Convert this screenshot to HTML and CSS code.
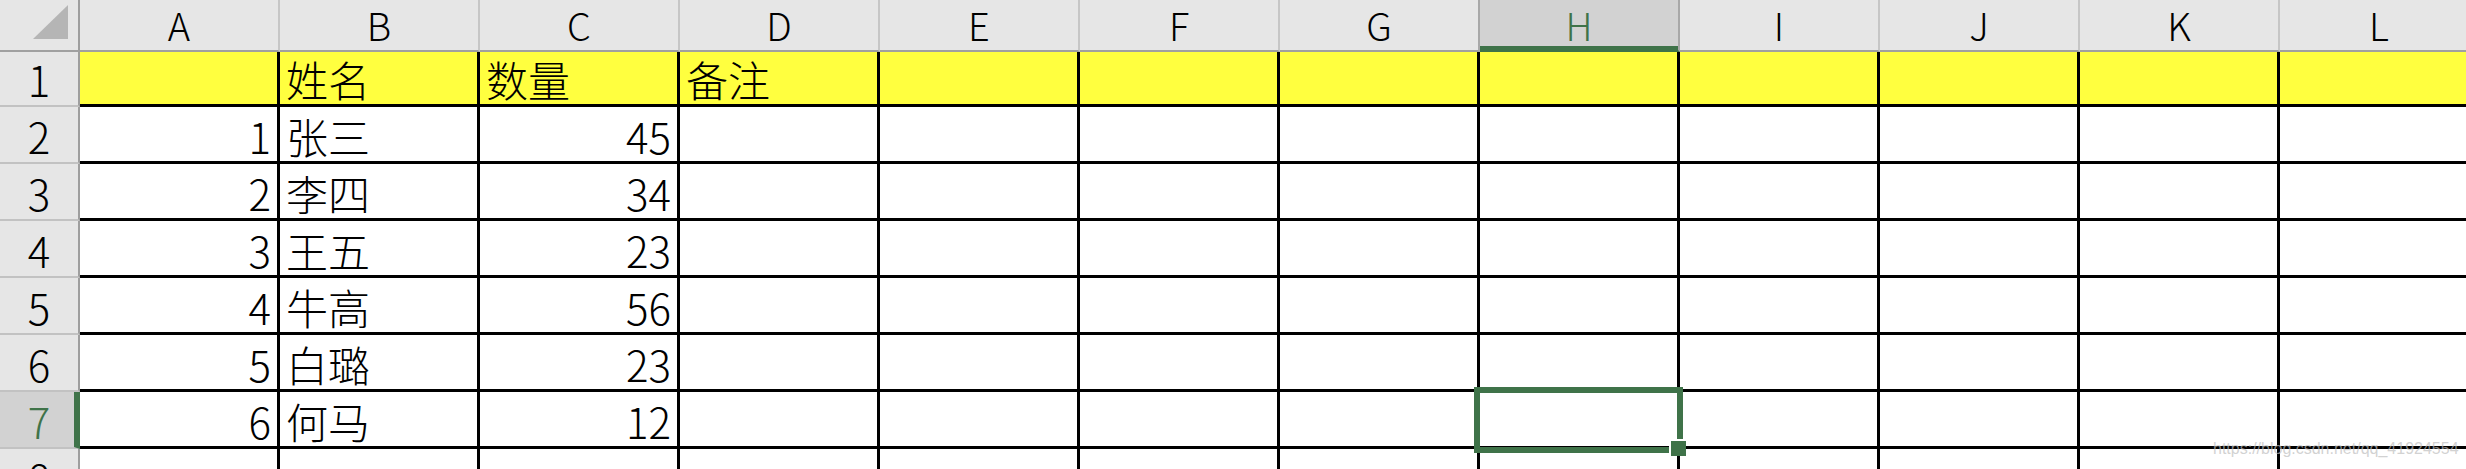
FILE: index.html
```html
<!DOCTYPE html>
<html lang="zh-CN">
<head>
  <meta charset="UTF-8">
  <title>Sheet1</title>
  <link rel="stylesheet" href="styles.css">
</head>
<body>

<div class="sheet">
  <div class="row head-row">
    <div class="corner"><span class="corner-mark"></span></div>
    <div class="col-head">A</div>
    <div class="col-head">B</div>
    <div class="col-head">C</div>
    <div class="col-head">D</div>
    <div class="col-head">E</div>
    <div class="col-head">F</div>
    <div class="col-head before-active">G</div>
    <div class="col-head active">H</div>
    <div class="col-head">I</div>
    <div class="col-head">J</div>
    <div class="col-head">K</div>
    <div class="col-head">L</div>
  </div>

  <div class="row title-row">
    <div class="row-head">1</div>
    <div class="cell"></div>
    <div class="cell">姓名</div>
    <div class="cell">数量</div>
    <div class="cell">备注</div>
    <div class="cell"></div><div class="cell"></div><div class="cell"></div><div class="cell"></div>
    <div class="cell"></div><div class="cell"></div><div class="cell"></div><div class="cell"></div>
  </div>

  <div class="row">
    <div class="row-head">2</div>
    <div class="cell num">1</div>
    <div class="cell">张三</div>
    <div class="cell num">45</div>
    <div class="cell"></div><div class="cell"></div><div class="cell"></div><div class="cell"></div><div class="cell"></div>
    <div class="cell"></div><div class="cell"></div><div class="cell"></div><div class="cell"></div>
  </div>

  <div class="row">
    <div class="row-head">3</div>
    <div class="cell num">2</div>
    <div class="cell">李四</div>
    <div class="cell num">34</div>
    <div class="cell"></div><div class="cell"></div><div class="cell"></div><div class="cell"></div><div class="cell"></div>
    <div class="cell"></div><div class="cell"></div><div class="cell"></div><div class="cell"></div>
  </div>

  <div class="row">
    <div class="row-head">4</div>
    <div class="cell num">3</div>
    <div class="cell">王五</div>
    <div class="cell num">23</div>
    <div class="cell"></div><div class="cell"></div><div class="cell"></div><div class="cell"></div><div class="cell"></div>
    <div class="cell"></div><div class="cell"></div><div class="cell"></div><div class="cell"></div>
  </div>

  <div class="row">
    <div class="row-head">5</div>
    <div class="cell num">4</div>
    <div class="cell">牛高</div>
    <div class="cell num">56</div>
    <div class="cell"></div><div class="cell"></div><div class="cell"></div><div class="cell"></div><div class="cell"></div>
    <div class="cell"></div><div class="cell"></div><div class="cell"></div><div class="cell"></div>
  </div>

  <div class="row">
    <div class="row-head">6</div>
    <div class="cell num">5</div>
    <div class="cell">白璐</div>
    <div class="cell num">23</div>
    <div class="cell"></div><div class="cell"></div><div class="cell"></div><div class="cell"></div><div class="cell"></div>
    <div class="cell"></div><div class="cell"></div><div class="cell"></div><div class="cell"></div>
  </div>

  <div class="row">
    <div class="row-head active">7</div>
    <div class="cell num">6</div>
    <div class="cell">何马</div>
    <div class="cell num">12</div>
    <div class="cell"></div><div class="cell"></div><div class="cell"></div><div class="cell"></div><div class="cell"></div>
    <div class="cell"></div><div class="cell"></div><div class="cell"></div><div class="cell"></div>
  </div>

  <div class="row">
    <div class="row-head">8</div>
    <div class="cell"></div><div class="cell"></div><div class="cell"></div><div class="cell"></div>
    <div class="cell"></div><div class="cell"></div><div class="cell"></div><div class="cell"></div>
    <div class="cell"></div><div class="cell"></div><div class="cell"></div><div class="cell"></div>
  </div>

  <!-- 选中单元格 H7 -->
  <div class="selection"><span class="fill-handle"></span></div>

  <div class="watermark">https://blog.csdn.net/qq_41924554</div>
</div>

</body>
</html>
```

FILE: styles.css
```css
body {
  margin: 0;
  padding: 0;
  background-color: #fff;
  overflow: hidden;
  font-family: "Noto Sans CJK SC", "Noto Sans", sans-serif;
  font-weight: 300;
  color: #000;
}
.sheet {
  position: relative;
  width: 2480px;
}
.row {
  display: grid;
  grid-template-columns: 80px repeat(12, 200px);
  height: 57px;
}
.head-row {
  height: 52px;
}
.title-row {
  height: 55px;
}
.corner {
  background-color: #e6e6e6;
  border-right: 2px solid #9e9e9e;
  border-bottom: 2px solid #a0a0a0;
  box-sizing: border-box;
  position: relative;
}
.corner-mark {
  position: absolute;
  left: 33px;
  top: 5px;
  width: 35px;
  height: 34px;
  background-color: #b5b5b5;
  clip-path: polygon(100% 0, 100% 100%, 0 100%);
}
.col-head {
  background-color: #e6e6e6;
  border-right: 2px solid #c6c6c6;
  border-bottom: 2px solid #a0a0a0;
  box-sizing: border-box;
  text-align: center;
  font-size: 38px;
  line-height: 50px;
}
.col-head.before-active {
  border-right-color: #a8a8a8;
}
.col-head.active {
  background-color: #d2d2d2;
  color: #3f7349;
  border-right-color: #a8a8a8;
  border-bottom-color: #3f7349;
  box-shadow: inset 0 -4px 0 #3f7349;
}
.row-head {
  background-color: #e6e6e6;
  border-right: 2px solid #9e9e9e;
  border-bottom: 2px solid #c2c2c2;
  box-sizing: border-box;
  display: flex;
  justify-content: center;
  align-items: flex-end;
  font-size: 42px;
  line-height: 52px;
}
.row-head.active {
  background-color: #d2d2d2;
  color: #3f7349;
  border-right: 6px solid #3f7349;
  padding-left: 4px;
}
.cell {
  border-right: 3px solid #000;
  border-bottom: 3px solid #000;
  box-sizing: border-box;
  display: flex;
  align-items: flex-end;
  padding: 0 6px;
  font-size: 42px;
  line-height: 50px;
  white-space: nowrap;
}
.title-row .cell {
  background-color: #ffff3f;
}
.cell.num {
  justify-content: flex-end;
}
.selection {
  position: absolute;
  left: 1474px;
  top: 387px;
  width: 209px;
  height: 66px;
  box-sizing: border-box;
  border: 6px solid #3f7349;
}
.fill-handle {
  position: absolute;
  left: 191px;
  top: 48px;
  width: 15px;
  height: 15px;
  background-color: #3f7349;
  box-shadow: -2px -2px 0 0 #fff;
}
.watermark {
  position: absolute;
  left: 2213px;
  top: 440px;
  font-family: "Liberation Sans", Arial, sans-serif;
  font-weight: 400;
  font-size: 16px;
  line-height: 18px;
  color: rgba(190, 190, 190, 0.7);
  white-space: nowrap;
}
```
